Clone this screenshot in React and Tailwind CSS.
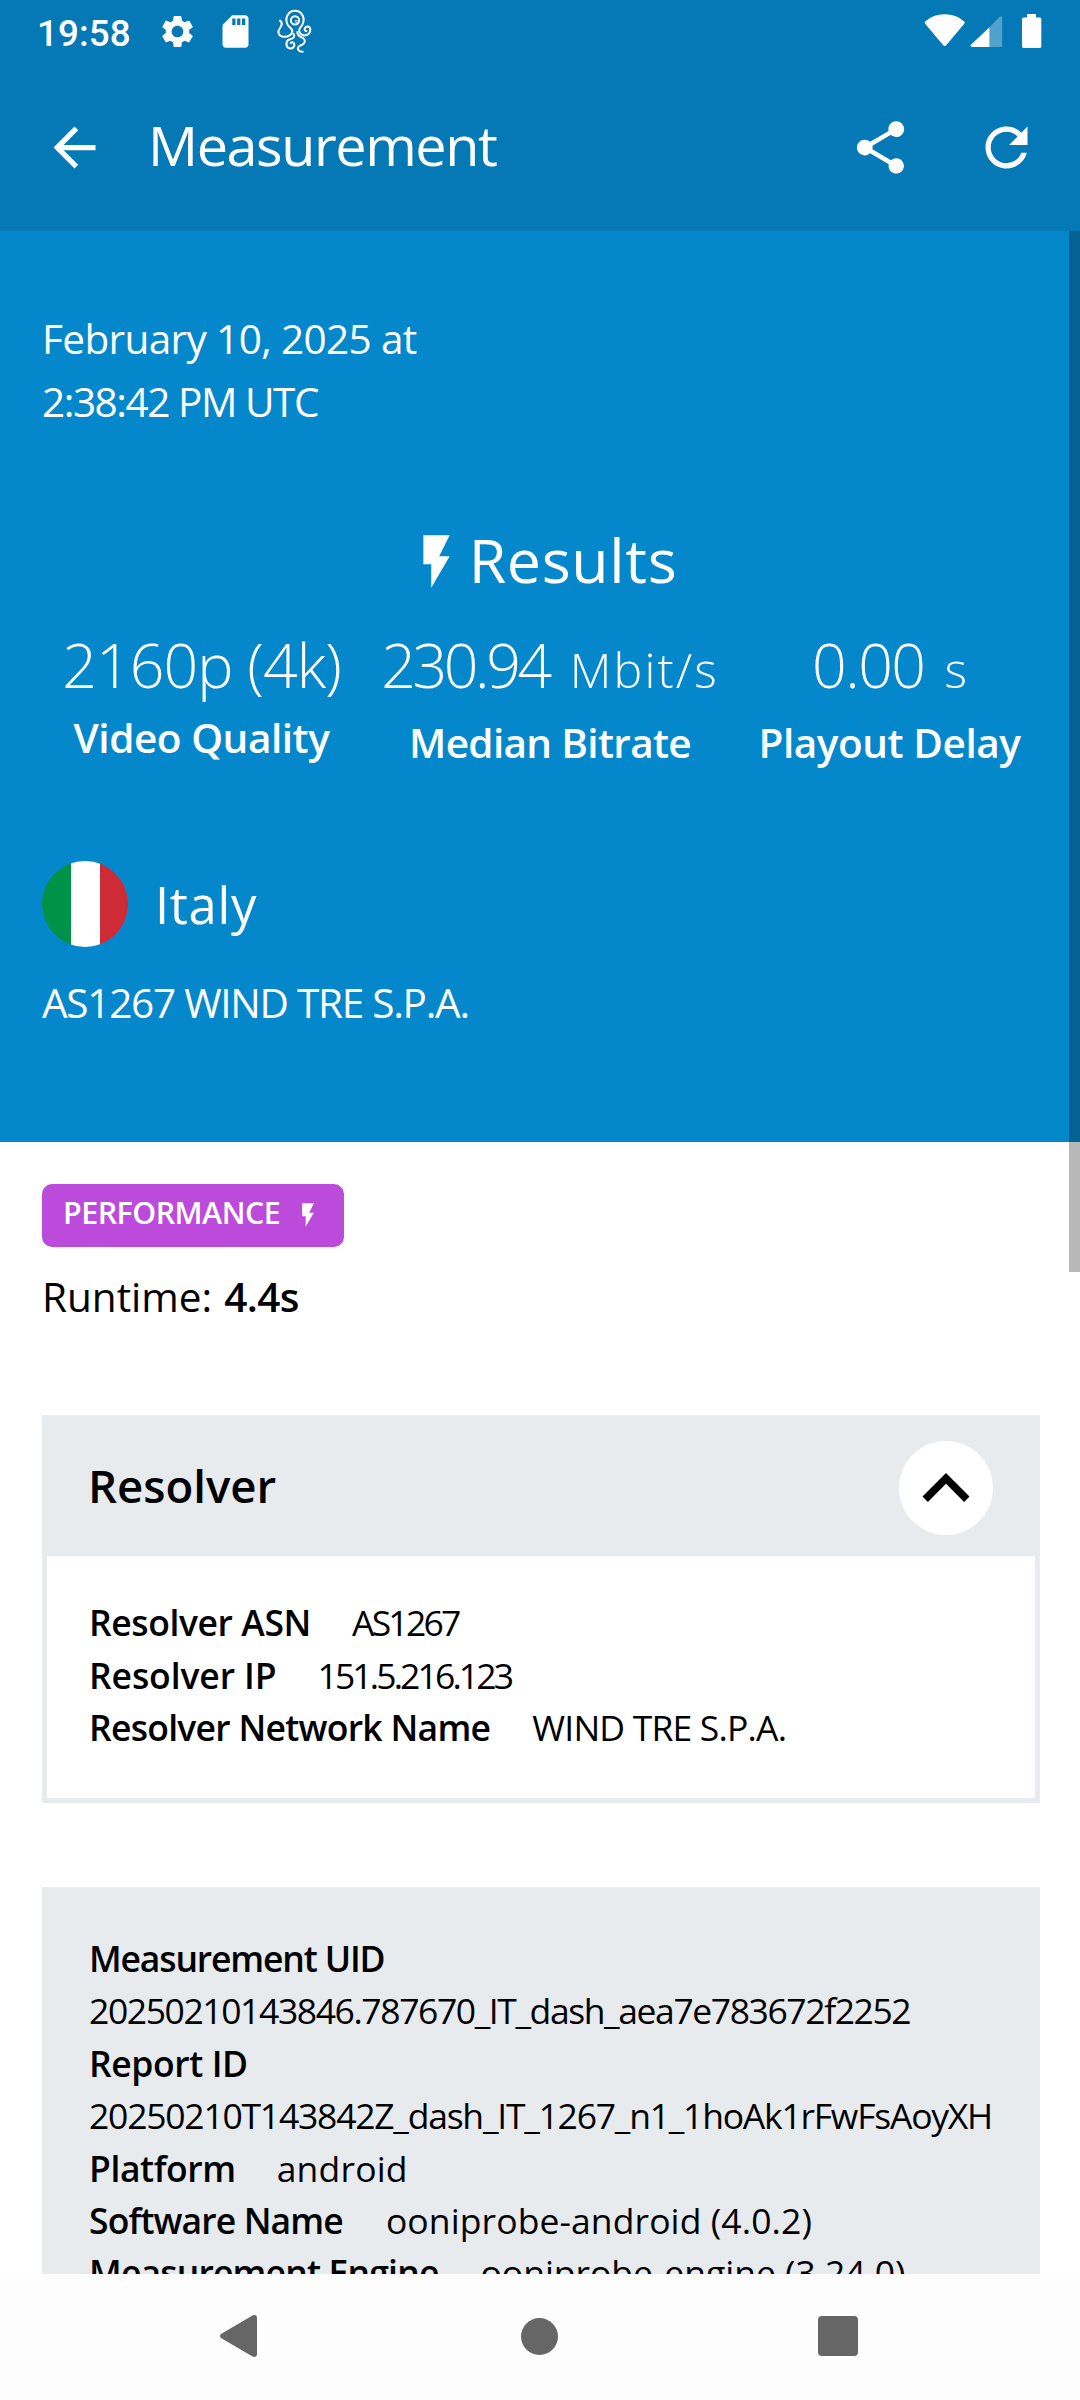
import React from "react";
import { MdArrowBack, MdFlashOn, MdRefresh, MdSdCard, MdSettings, MdShare } from "react-icons/md";

function OctopusIcon() {
  return (
    <svg viewBox="0 0 150 150" className="size-[50px]" fill="none" stroke="currentColor" strokeWidth="6" strokeLinecap="round">
      <path d="M30 44C38 50 36 58 30 66C22 76 24 90 38 92C54 94 68 86 67 74C66 68 59 64 54 58C42 38 54 14 75 14C96 14 108 38 96 58C88 66 84 76 92 84C102 92 120 88 121 72C121 60 108 58 104 68C103 72 106 75 109 75" />
      <circle cx="75" cy="43" r="12.5" />
      <circle cx="79" cy="46" r="1" />
      <path d="M71 84C76 92 70 97 60 100C48 103 46 118 54 125C63 131 74 125 73 115C72 109 66 107 62 111" />
      <path d="M82 78C82 90 90 92 99 96C107 101 106 112 97 116C86 119 80 126 86 133C89 137 93 137 98 137" />
    </svg>
  );
}

function StatusBar() {
  return (
    <div className="flex h-[63px] justify-between pl-[37px]">
      <div className="flex">
        <span className="w-[121px] pt-[13px] font-[Roboto] text-[36.75px] leading-[42px] font-medium tracking-[0.1px]">19:58</span>
        <MdSettings className="mt-[12px] size-[39px]" />
        <MdSdCard className="mt-[12px] ml-[19px] size-[39px]" />
        <div className="mt-[6px] ml-[15px]">
          <OctopusIcon />
        </div>
      </div>
      <svg viewBox="0 0 118 36" className="mt-[14px] mr-[38px] h-[36px] w-[118px]">
        <path d="M1.2 7.5Q9 0.3 20.7 0.3T40.2 7.5Q41.2 8.6 40.3 9.8L22.4 31Q20.7 32.8 19 31L1.1 9.8Q.2 8.6 1.2 7.5z" fill="white" />
        <path d="M65.5 13.3V33H47.6Q46.4 32.6 46.6 31z" fill="white" />
        <path d="M65.5 13.3L75.3 3Q78 1 78.2 4V32Q78 33 77.2 33H65.5z" fill="white" fillOpacity=".3" />
        <path d="M103 0H112V3.5H116Q117.3 3.7 117.3 5V32.5Q117 34 115.8 34H99.5Q98.2 33.8 98 32.5V5Q98.2 3.7 99.4 3.5H103z" fill="white" />
      </svg>
    </div>
  );
}

function AppBar() {
  return (
    <header className="flex h-[168px] items-center pr-[42px] pl-[43px]">
      <MdArrowBack className="size-[63px]" />
      <h1 className="mb-[6px] ml-[42px] grow text-[55.7px] leading-[84px] font-normal tracking-[-1.4px]">Measurement</h1>
      <MdShare className="size-[63px]" />
      <MdRefresh className="ml-[63px] size-[63px]" />
    </header>
  );
}

function Hero() {
  return (
    <section className="h-[911px] bg-[#0588cb] px-[42px] pt-[76px] text-white">
      <div className="text-[40.5px] leading-[63px]">
        <p className="tracking-[-0.62px]">February 10, 2025 at</p>
        <p className="tracking-[-1.45px]">2:38:42 PM UTC</p>
      </div>
      <div className="mt-[84px] flex h-[84px] items-center justify-center gap-px pl-[2px]">
        <MdFlashOn className="mt-[4px] size-[63px]" />
        <h2 className="mt-[2px] text-[60.8px] leading-[84px] font-normal tracking-[0.68px]">Results</h2>
      </div>
      <div className="mt-[22px] grid w-[1000px] grid-cols-[319px_378px_301px] text-center">
        <div>
          <p className="text-[60.8px] leading-[84px] font-light tracking-[-0.95px]">2160p (4k)</p>
          <p className="mt-[3px] text-[40.5px] leading-[56px] font-semibold tracking-[-0.45px]">Video Quality</p>
        </div>
        <div>
          <p className="flex items-baseline justify-center gap-[21px] leading-[84px] font-light">
            <span className="text-[60.8px] tracking-[-3.4px]">230.94</span>
            <span className="text-[48.3px] tracking-[2.1px]">Mbit/s</span>
          </p>
          <p className="mt-[4px] text-[40.5px] leading-[56px] font-semibold tracking-[-0.66px]">Median Bitrate</p>
        </div>
        <div>
          <p className="flex items-baseline justify-center gap-[20px] leading-[84px] font-light">
            <span className="text-[60.8px] tracking-[-1.5px]">0.00</span>
            <span className="text-[48.3px]">s</span>
          </p>
          <p className="mt-[4px] text-[40.5px] leading-[56px] font-semibold tracking-[-0.45px]">Playout Delay</p>
        </div>
      </div>
      <div className="mt-[90px] flex h-[86px] items-center gap-[27px]">
        <div className="flex size-[86px] overflow-hidden rounded-full">
          <div className="grow bg-[#009246]" />
          <div className="w-[29px] bg-white" />
          <div className="grow bg-[#ce2b37]" />
        </div>
        <span className="mt-[2px] text-[50.7px] leading-[86px] tracking-[0.7px]">Italy</span>
      </div>
      <p className="mt-[24px] text-[40.5px] leading-[63px] tracking-[-1.26px]">AS1267 WIND TRE S.P.A.</p>
    </section>
  );
}

function ResolverCard() {
  return (
    <section className="mt-[87px] bg-[#e8ebee]">
      <div className="flex h-[141px] items-center justify-between pr-[47px] pl-[46px]">
        <h3 className="text-[45.6px] leading-[63px] font-semibold tracking-[-0.05px]">Resolver</h3>
        <button className="mt-[5px] flex size-[94px] items-center justify-center rounded-full bg-white">
          <svg viewBox="0 0 48 30" className="mb-[2px] h-[30px] w-[48px]" fill="none" stroke="black" strokeWidth="7.6">
            <path d="M3.2 27.2L24 6.4L44.8 27.2" />
          </svg>
        </button>
      </div>
      <div className="h-[247px] border-x-5 border-b-5 border-[#e8ebee] bg-white pt-[40px] pl-[42px] text-[35.5px] leading-[52.5px]">
        <p className="flex gap-[41px]">
          <b className="font-semibold tracking-[-0.4px]">Resolver ASN</b>
          <span className="tracking-[-2.74px]">AS1267</span>
        </p>
        <p className="flex gap-[41px]">
          <b className="font-semibold tracking-[-0.1px]">Resolver IP</b>
          <span className="tracking-[-2.87px]">151.5.216.123</span>
        </p>
        <p className="flex gap-[42px]">
          <b className="font-semibold tracking-[-0.72px]">Resolver Network Name</b>
          <span className="tracking-[-0.81px]">WIND TRE S.P.A.</span>
        </p>
      </div>
    </section>
  );
}

function DetailsCard() {
  return (
    <section className="mt-[84px] h-[480px] bg-[#e8ebee] pt-[45px] pl-[47px] text-[35.5px] leading-[52.4px] whitespace-nowrap">
      <p className="font-semibold tracking-[-1.15px]">Measurement UID</p>
      <p className="tracking-[-1.41px]">20250210143846.787670_IT_dash_aea7e783672f2252</p>
      <p className="font-semibold tracking-[-0.4px]">Report ID</p>
      <p className="tracking-[-1.23px]">20250210T143842Z_dash_IT_1267_n1_1hoAk1rFwFsAoyXH</p>
      <p className="flex gap-[41px]">
        <b className="font-semibold tracking-[-0.42px]">Platform</b>
        <span className="tracking-[0.18px]">android</span>
      </p>
      <p className="flex gap-[43px]">
        <b className="font-semibold tracking-[-0.88px]">Software Name</b>
        <span className="tracking-[0.1px]">ooniprobe-android (4.0.2)</span>
      </p>
      <p className="flex gap-[42px]">
        <b className="font-semibold tracking-[-0.83px]">Measurement Engine</b>
        <span className="tracking-[-0.03px]">ooniprobe-engine (3.24.0)</span>
      </p>
    </section>
  );
}

function NavBar() {
  return (
    <nav className="flex h-[126px] items-center bg-[#fdfdfd] pb-[2px] pl-[219px] text-[#666666]">
      <svg viewBox="0 0 38 44" className="h-[44px] w-[38px]" fill="currentColor">
        <path d="M2 20L33.5 1.5Q37.5 0 38 3.5V40.5Q37.5 44 33.5 42.5L2 24Q0 22 2 20z" />
      </svg>
      <div className="ml-[264px] size-[37px] rounded-full bg-[#666666]" />
      <div className="ml-[260px] size-[40px] rounded-[4px] bg-[#666666]" />
    </nav>
  );
}

export default function App() {
  return (
    <div className="flex h-[2400px] w-[1080px] flex-col overflow-hidden bg-white font-['Open_Sans','Noto_Sans',sans-serif] text-black">
      <div className="bg-[#0579b5] text-white">
        <StatusBar />
        <AppBar />
      </div>
      <main className="relative h-[2043px] overflow-hidden">
        <Hero />
        <div className="mr-[40px] ml-[42px] pt-[42px]">
          <div className="flex h-[63px] w-[302px] rounded-[10px] bg-[#bc4bdb] pl-[21px] text-white">
            <span className="pt-[8px] text-[30.4px] leading-[42px] font-semibold tracking-[-0.5px]">PERFORMANCE</span>
            <MdFlashOn className="mt-[17px] ml-[14px] size-[28px]" />
          </div>
          <p className="mt-[18px] flex gap-[12px] text-[40.5px] leading-[63px]">
            <span>Runtime:</span>
            <b className="font-semibold tracking-[-0.6px]">4.4s</b>
          </p>
          <ResolverCard />
          <DetailsCard />
        </div>
        <div className="absolute top-0 right-0 h-[1041px] w-[11px] bg-black/28" />
      </main>
      <NavBar />
    </div>
  );
}
